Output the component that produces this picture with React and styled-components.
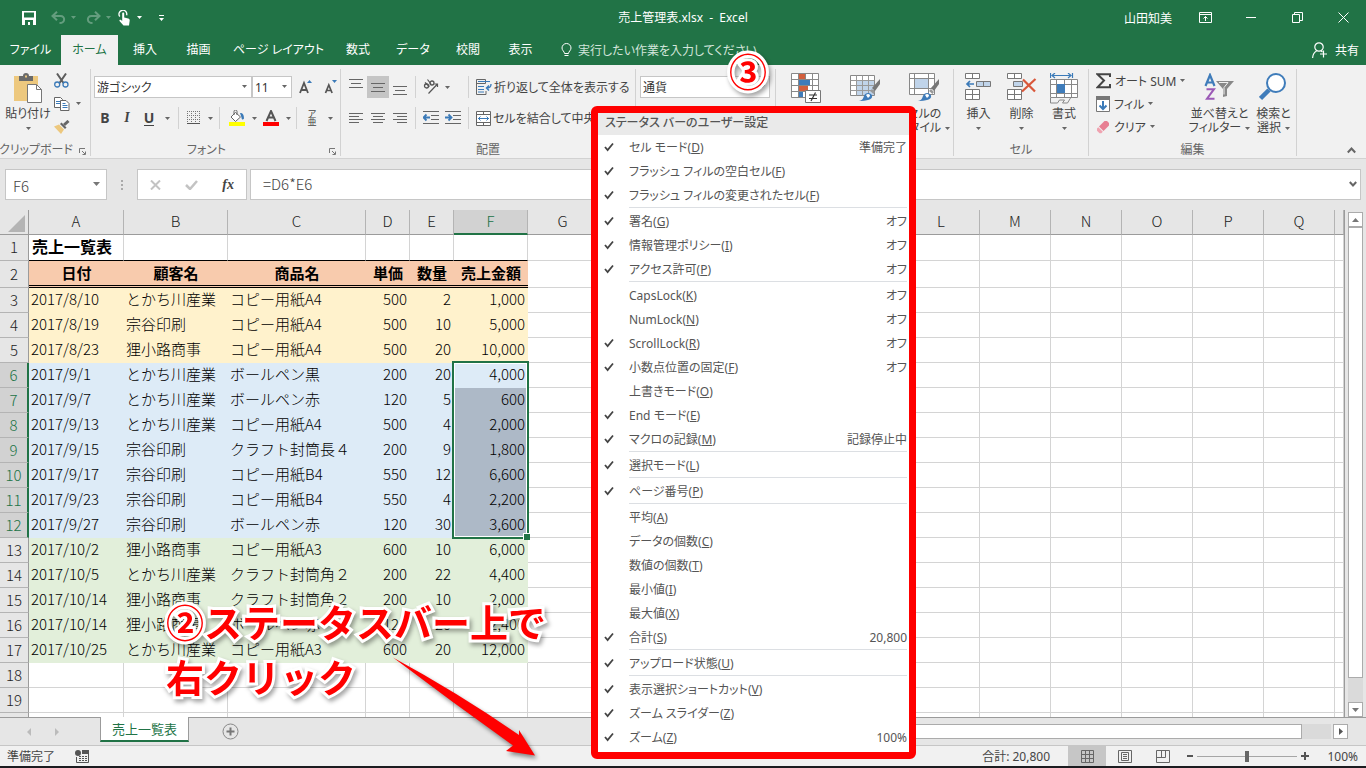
import React from 'react';
import styled, { createGlobalStyle, css } from 'styled-components';

const GREEN = '#217346';

const GlobalStyle = createGlobalStyle`
  * { box-sizing: border-box; }
  body {
    margin: 0;
    overflow: hidden;
    background: #e6e6e6;
    font-family: "Noto Sans", "Noto Sans CJK JP", sans-serif;
    font-size: 12px;
    font-feature-settings: "palt";
    color: #444;
  }
  button, input, select {
    font: inherit;
    font-feature-settings: inherit;
    color: inherit;
    border: 0;
    border-radius: 0;
    padding: 0;
    margin: 0;
    background: none;
    outline: none;
  }
  button { white-space: nowrap; }
`;

const Window = styled.div`
  position: relative;
  display: flex;
  flex-direction: column;
  height: 100vh;
  overflow: hidden;
`;

const Icon = styled.svg`
  display: block;
  flex: none;
  fill: none;
  stroke: none;
`;

/* ---------- title bar ---------- */

const TitleBar = styled.header`
  display: grid;
  grid-template-columns: 1fr auto 1fr;
  align-items: center;
  flex: none;
  height: 35px;
  background: ${GREEN};
  color: #fff;
`;

const QuickAccess = styled.div`
  display: flex;
  align-items: center;
  padding-left: 19px;
  height: 32px;
`;

const QuickButton = styled.button`
  display: flex;
  align-items: center;
  justify-content: center;
  width: ${(p) => (p.$narrow ? 11 : 20)}px;
  height: 22px;
  margin-right: ${(p) => p.$gap || 0}px;
  opacity: ${(p) => (p.disabled ? 0.3 : 1)};
`;

const WindowTitle = styled.h1`
  margin: 0;
  font-size: 12px;
  font-weight: 400;
  line-height: 32px;
  white-space: pre;
`;

const WindowButtons = styled.div`
  display: flex;
  align-items: center;
  justify-content: flex-end;
  height: 32px;
`;

const UserName = styled.span`
  margin-right: 10px;
`;

const WindowButton = styled.button`
  display: flex;
  align-items: center;
  justify-content: center;
  width: 46px;
  height: 32px;
`;

/* ---------- ribbon tabs ---------- */

const TabRow = styled.nav`
  display: flex;
  flex: none;
  height: 30px;
  background: ${GREEN};
  color: #fff;
`;

const RibbonTab = styled.button`
  width: ${(p) => p.$width}px;
  height: 30px;
  line-height: 28px;
  text-align: center;
  ${(p) => p.$active && css`
    background: #f1f1f1;
    color: ${GREEN};
  `}
`;

const TellMe = styled.button`
  display: flex;
  align-items: center;
  gap: 6px;
  margin-left: 14px;
  color: #d3e5db;
`;

const ShareButton = styled.button`
  display: flex;
  align-items: center;
  gap: 8px;
  margin-left: auto;
  padding-right: 7px;
`;

/* ---------- ribbon ---------- */

const RibbonBar = styled.section`
  display: flex;
  flex: none;
  height: 94px;
  padding: 4px 0 2px;
  background: #f1f1f1;
  border-bottom: 1px solid #d2d2d2;
`;

const RibbonGroup = styled.div`
  position: relative;
  display: flex;
  flex-direction: column;
  flex: none;
  width: ${(p) => p.$width}px;
  border-right: 1px solid #d2d2d2;
`;

const GroupBody = styled.div`
  display: flex;
  flex: 1;
  padding-left: ${(p) => p.$pad || 0}px;
`;

const GroupFooter = styled.div`
  display: flex;
  justify-content: center;
  align-items: center;
  height: 12px;
  line-height: 12px;
  padding-right: ${(p) => (p.$launcher ? 18 : 0)}px;
  white-space: nowrap;
  color: #666;
`;

const Launcher = styled.button`
  position: absolute;
  right: 4px;
  bottom: 1px;
`;

const Stack = styled.div`
  display: flex;
  flex-direction: column;
`;

const ToolStack = styled(Stack)`
  padding-top: 7px;
  gap: 9px;
`;

const ToolRow = styled.div`
  display: flex;
  align-items: center;
  height: 22px;
`;

const ToolButton = styled.button`
  display: flex;
  align-items: center;
  justify-content: center;
  width: ${(p) => p.$width || 22}px;
  height: 22px;
  background: ${(p) => (p.$active ? '#c5c5c5' : 'none')};
`;

const LabelButton = styled.button`
  display: flex;
  align-items: center;
  gap: ${(p) => p.$gap || 4}px;
  height: ${(p) => p.$height || 22}px;
  padding-left: ${(p) => p.$pad || 0}px;
`;

const Glyph = styled.span`
  font-size: 14px;
  font-weight: 700;
  font-style: ${(p) => (p.$italic ? 'italic' : 'normal')};
  font-family: ${(p) => (p.$italic ? '"Liberation Serif", serif' : '"Noto Sans", sans-serif')};
  border-bottom: ${(p) => (p.$underline ? '1px solid #444' : '0')};
  line-height: 14px;
`;

const Divider = styled.span`
  width: 1px;
  height: 22px;
  margin: 0 4px;
  background: #d2d2d2;
`;

const Combo = styled.span`
  position: relative;
  display: block;
  width: ${(p) => p.$width}px;
  height: 22px;

  select {
    appearance: none;
    width: 100%;
    height: 22px;
    padding: 0 16px 0 2px;
    border: 1px solid #c6c6c6;
    background: #fff;
    color: #333;
  }

  svg {
    position: absolute;
    right: 5px;
    top: 9px;
    pointer-events: none;
  }
`;

const BigButton = styled.button`
  display: flex;
  flex-direction: column;
  align-items: center;
  width: ${(p) => p.$width}px;
  padding-top: 4px;
`;

const BigIcon = styled.span`
  display: flex;
  align-items: flex-start;
  justify-content: center;
  height: 34px;
`;

const Caption = styled.span`
  display: flex;
  align-items: center;
  gap: 4px;
  height: 14px;
  line-height: 14px;
`;

const IconStack = styled.div`
  display: flex;
  flex-direction: column;
  padding-left: 1px;
`;

const IconStackButton = styled.button`
  display: flex;
  align-items: center;
  gap: 6px;
  height: 23px;
`;

const RibbonEnd = styled.div`
  display: flex;
  flex: 1;
  justify-content: flex-end;
  align-items: flex-end;
  padding: 0 10px 2px 0;
`;

/* ---------- formula bar ---------- */

const FormulaRow = styled.section`
  display: flex;
  flex: none;
  align-items: center;
  height: 51px;
  padding: 0 5px;
`;

const NameBox = styled.div`
  position: relative;
  width: 102px;
  height: 31px;

  input {
    width: 100%;
    height: 31px;
    padding: 2px 24px 0 7px;
    border: 1px solid #c6c6c6;
    background: #fff;
    font-family: "Noto Sans CJK JP", sans-serif;
    font-size: 15px;
    font-weight: 300;
  }

  svg {
    position: absolute;
    right: 7px;
    top: 13px;
  }
`;

const FormulaButtons = styled.div`
  display: flex;
  align-items: center;
  justify-content: space-around;
  width: 110px;
  height: 31px;
  border: 1px solid #c6c6c6;
  background: #fff;
`;

const FormulaField = styled.div`
  position: relative;
  flex: 1;
  margin-left: 3px;

  input {
    display: block;
    width: 100%;
    height: 31px;
    padding: 0 24px 2px 12px;
    border: 1px solid #c6c6c6;
    background: #fff;
    font-family: "Noto Sans CJK JP", sans-serif;
    font-size: 15px;
    font-weight: 300;
  }

  svg {
    position: absolute;
    right: 4px;
    top: 12px;
  }
`;

const Grip = styled.span`
  display: flex;
  justify-content: center;
  width: 30px;
`;

/* ---------- worksheet ---------- */

const SheetArea = styled.main`
  display: flex;
  flex: 1;
  min-height: 0;
`;

const SheetView = styled.div`
  position: relative;
  flex: 1;
  min-width: 0;
  overflow: hidden;
  background: #fff;
  border-right: 1px solid #9b9b9b;
`;

const Grid = styled.table`
  width: 100%;
  table-layout: fixed;
  border-collapse: separate;
  border-spacing: 0;
  font-family: "Noto Sans CJK JP", sans-serif;
  font-size: 15px;
  font-weight: 300;
  font-feature-settings: normal;
  color: #000;
`;

const ColumnHead = styled.th`
  height: 25px;
  padding: 0 0 2px;
  font-weight: 300;
  line-height: 20px;
  background: ${(p) => (p.$selected ? '#d2d2d2' : '#e6e6e6')};
  color: ${(p) => (p.$selected ? GREEN : '#222')};
  border-right: 1px solid #b4b4b4;
  border-bottom: ${(p) => (p.$selected ? `2px solid ${GREEN}` : '1px solid #9b9b9b')};
`;

const CornerHead = styled(ColumnHead)`
  border-right-color: #9b9b9b;
  svg { margin: 4px 0 0 8px; }
`;

const RowHead = styled.th`
  padding: 0 0 1px;
  font-weight: 300;
  line-height: 20px;
  text-align: center;
  background: ${(p) => (p.$selected ? '#d2d2d2' : '#e6e6e6')};
  color: ${(p) => (p.$selected ? GREEN : '#222')};
  border-bottom: 1px solid #b4b4b4;
  border-right: ${(p) => (p.$selected ? `2px solid ${GREEN}` : '1px solid #9b9b9b')};
`;

const Row = styled.tr`
  height: ${(p) => p.$height}px;
`;

const Cell = styled.td`
  padding: 0 2px 3px;
  line-height: 20px;
  white-space: nowrap;
  text-align: ${(p) => p.$align || 'left'};
  border-right: 1px solid ${(p) => p.$fill || '#d4d4d4'};
  border-bottom: 1px solid ${(p) => p.$fill || '#d4d4d4'};
  background: ${(p) => p.$fill || '#fff'};
  ${(p) => p.$title && css`
    padding-left: 3px;
    font-weight: 700;
    font-size: 16px;
  `}
  ${(p) => p.$ruled && css`border-bottom-color: #000;`}
  ${(p) => p.$heading && css`
    padding-bottom: 1px;
    font-weight: 700;
    border-right: 0;
    border-bottom: 3px double #000;
  `}
`;

const Selection = styled.div`
  position: absolute;
  left: 452px;
  top: 151px;
  width: 77px;
  height: 178px;
  border: 2px solid ${GREEN};
  box-shadow: inset 0 0 0 1px #fff;

  &::after {
    content: "";
    position: absolute;
    right: -3px;
    bottom: -3px;
    width: 6px;
    height: 6px;
    background: ${GREEN};
    border: 1px solid #fff;
    border-width: 1px 0 0 1px;
  }
`;

const VerticalScroll = styled.div`
  display: flex;
  flex-direction: column;
  align-items: center;
  flex: none;
  width: 21px;
  padding-top: 2px;
  background: #e6e6e6;
`;

const ScrollArrow = styled.button`
  display: flex;
  flex: none;
  align-items: center;
  justify-content: center;
  width: 15px;
  height: 15px;
  background: #fff;
  border: 1px solid #ababab;
`;

const VerticalTrack = styled.div`
  flex: 1;
  width: 15px;
  background: #dadada;
`;

const VerticalThumb = styled.div`
  height: 95%;
  background: #fff;
  border: 1px solid #ababab;
`;

/* ---------- sheet tabs ---------- */

const SheetTabs = styled.nav`
  display: flex;
  flex: none;
  height: 28px;
  border-top: 1px solid #9b9b9b;
`;

const SheetNav = styled.div`
  display: flex;
  align-items: center;
  gap: 24px;
  width: 100px;
  padding-left: 27px;
`;

const SheetTab = styled.button`
  width: 89px;
  height: 25px;
  margin-top: -1px;
  font-size: 13px;
  background: #fff;
  color: ${GREEN};
  border: solid #9b9b9b;
  border-width: 0 1px;
  border-bottom: 2px solid ${GREEN};
`;

const AddSheet = styled.button`
  display: flex;
  align-items: center;
  margin-left: 33px;
`;

const HorizontalScroll = styled.div`
  display: flex;
  align-items: center;
  flex: 1;
  gap: 2px;
  margin-left: 366px;
  padding-right: 18px;
`;

const HorizontalTrack = styled.div`
  flex: 1;
  height: 15px;
  background: #dadada;
`;

const HorizontalThumb = styled.div`
  width: 96%;
  height: 15px;
  background: #fff;
  border: 1px solid #ababab;
`;

/* ---------- status bar ---------- */

const StatusBar = styled.footer`
  display: flex;
  align-items: center;
  flex: none;
  height: 23px;
  padding: 0 8px 0 7px;
  background: #f1f1f1;
  border-top: 1px solid #c6c6c6;
  border-bottom: 2px solid #1c1c20;
`;

const StatusText = styled.span`
  margin-right: ${(p) => p.$gap || 0}px;
`;

const StatusRight = styled.div`
  display: flex;
  align-items: center;
  margin-left: auto;
`;

const ViewButton = styled.button`
  display: flex;
  align-items: center;
  justify-content: center;
  width: 38px;
  height: 20px;
  background: ${(p) => (p.$active ? '#c6c6c6' : 'none')};
`;

const ZoomSlider = styled.input`
  appearance: none;
  width: 100px;
  height: 14px;
  margin: 0 4px;
  background: linear-gradient(#a6a6a6, #a6a6a6) center / 100% 1px no-repeat;

  &::-webkit-slider-thumb {
    appearance: none;
    width: 4px;
    height: 11px;
    background: #666;
  }
`;

const ZoomLevel = styled.button`
  width: 49px;
  text-align: right;
`;

/* ---------- context menu and notes ---------- */

const MenuFrame = styled.div`
  position: absolute;
  left: 591px;
  top: 106px;
  width: 325px;
  padding-bottom: 3px;
  background: #fff;
  border: 7px solid #f00;
  border-radius: 6px;
  color: #555;
`;

const MenuTitle = styled.div`
  height: 22px;
  padding-left: 7px;
  line-height: 20px;
  font-weight: 500;
  color: #555;
  background: #eaeaea;
`;

const MenuItem = styled.button`
  display: grid;
  grid-template-columns: 31px 1fr auto;
  align-items: center;
  width: 100%;
  height: 24px;
  padding-right: 2px;
  text-align: left;

  svg { margin-left: 6px; }
`;

const MenuRule = styled.hr`
  height: 1px;
  margin: 0 2px 1px 31px;
  border: 0;
  background: #dcdfe3;
`;

const Note = styled.p`
  position: absolute;
  left: ${(p) => p.$left}px;
  top: ${(p) => p.$top}px;
  margin: 0;
  font-family: "Noto Sans CJK JP", sans-serif;
  font-feature-settings: normal;
  font-size: 38px;
  font-weight: 700;
  line-height: 55px;
  white-space: pre;
  color: #f00;
  -webkit-text-stroke: 6px #fff;
  paint-order: stroke fill;
  stroke-linejoin: round;
  filter: drop-shadow(2px 3px 2px rgba(0, 0, 0, 0.35));
  pointer-events: none;
`;

const Arrow = styled.svg`
  position: absolute;
  left: 390px;
  top: 652px;
  filter: drop-shadow(2px 3px 2px rgba(0, 0, 0, 0.45));
  pointer-events: none;
`;

/* ---------- small drawings ---------- */

const Caret = ({ color = '#666' }) => (
  <Icon width="5" height="3"><path d="M0 0h5L2.5 3z" fill={color} /></Icon>
);

const WideCaret = () => (
  <Icon width="7" height="4"><path d="M0 0h7L3.5 4z" fill="#777" /></Icon>
);

const Check = () => (
  <Icon width="10" height="10" viewBox="0 0 10 10">
    <path d="M1 5l2.6 3L9 1.5" stroke="#444" strokeWidth="1.8" />
  </Icon>
);

const LauncherIcon = () => (
  <Icon width="7" height="7" viewBox="0 0 7 7">
    <path d="M.5 5V.5H6M3 3l3 3M6.5 3.5v3h-3" stroke="#777" />
  </Icon>
);

const SaveIcon = () => (
  <Icon width="14" height="14" viewBox="0 0 14 14">
    <path d="M0 0h14v14H0z M2 1.5v5h10v-5z M3 9v5h8V9z" fill="#fff" fillRule="evenodd" />
    <path d="M6 11h2v3H6z" fill="#fff" />
  </Icon>
);

const UndoIcon = ({ flip }) => (
  <Icon width="15" height="13" viewBox="0 0 15 13">
    <g transform={flip ? 'translate(15 0) scale(-1 1)' : undefined} stroke="#fff" strokeWidth="2">
      <path d="M6 .8L1.5 5 6 9.2M2 5h7.5c5 0 5 7-1 7" />
    </g>
  </Icon>
);

const TouchIcon = () => (
  <Icon width="13" height="16" viewBox="0 0 13 16">
    <path d="M1.8 6.5a3.9 3.9 0 1 1 6.8-1.2" stroke="#fff" strokeWidth="1.3" />
    <path d="M4.2 3.5c0-1.4 2-1.4 2 0v4l4 1c1 .3 1.6 1 1.5 2L11 15.5H5.5L1.5 11c-.5-1 .7-1.8 1.5-1l1.2 1z" fill="#fff" />
  </Icon>
);

const PasteIcon = () => (
  <Icon width="29" height="31" viewBox="0 0 29 31">
    <path d="M0 3h24v25H0z" fill="#edc87e" />
    <path d="M5 3h4a3 3 0 0 1 6 0h4v5H5z" fill="#6a6a6a" />
    <path d="M11 2.5h2v2h-2z" fill="#edc87e" />
    <path d="M13.5 11.5h9l5 5v13h-14z" fill="#fff" stroke="#777" />
    <path d="M22.5 11.5v5h5" stroke="#777" />
  </Icon>
);

const CutIcon = () => (
  <Icon width="15" height="15" viewBox="0 0 15 15">
    <path d="M3 .5l6.5 9.500M12 .5L5.5 10" stroke="#5d5d5d" strokeWidth="2" />
    <circle cx="3.2" cy="11.5" r="2.5" stroke="#3b7ab8" strokeWidth="1.3" />
    <circle cx="11.5" cy="11.5" r="2.5" stroke="#3b7ab8" strokeWidth="1.3" />
  </Icon>
);

const CopyIcon = () => (
  <Icon width="16" height="14" viewBox="0 0 16 14">
    <path d="M.5.5h6l2 2v8h-8z" fill="#fff" stroke="#666" />
    <path d="M2 4.5h4M2 6.5h4" stroke="#3b7ab8" />
    <path d="M6.5 3.5H12l3 3v7H6.500z" fill="#fff" stroke="#666" />
    <path d="M8.5 6.5h3M8.5 8.5h5M8.5 10.5h5" stroke="#3b7ab8" />
  </Icon>
);

const BrushIcon = () => (
  <Icon width="16" height="14" viewBox="0 0 16 14">
    <path d="M0 6.5l5-2 5 5L7 14z" fill="#edc87e" />
    <path d="M6 4l1.500-1.500 5 5L11 9z" fill="#666" />
    <path d="M10 5l4.500-4" stroke="#666" strokeWidth="3" />
  </Icon>
);

const SizeIcon = ({ small }) => (
  <Icon width="14" height="16" viewBox="0 0 14 16">
    {small
      ? <path d="M1.500 14L4.800 6l3.300 8M2.800 11.500h4" stroke="#555" strokeWidth="1.700" />
      : <path d="M1 14L5 4l4 10M2.500 11h5" stroke="#555" strokeWidth="1.800" />}
    <path d={small ? 'M8 1h5l-2.500 3z' : 'M8 4h5l-2.500-3z'} fill="#3b7ab8" />
  </Icon>
);

const BordersIcon = () => (
  <Icon width="14" height="14" viewBox="0 0 14 14">
    <path d="M.5 0v13M4.500 0v13M8.500 0v13M12.500 0v13M0 .5h14M0 4.500h14M0 8.500h14" stroke="#777" strokeDasharray="1 1" />
    <path d="M0 12.500h13" stroke="#555" />
  </Icon>
);

const FillIcon = () => (
  <Icon width="16" height="16" viewBox="0 0 16 16">
    <path d="M6.500 2.500l5 4.500-5 4.500L2 7z" fill="#fff" stroke="#666" />
    <path d="M5 5V1.500a1.500 1.500 0 0 1 3 0V5" stroke="#666" />
    <path d="M11 3c3 0 4 2 4 5.500-1 2-2.500 1-2.500-1z" fill="#3b7ab8" />
    <path d="M0 12h16v4H0z" fill="#ff0" />
  </Icon>
);

const FontColorIcon = () => (
  <Icon width="16" height="16" viewBox="0 0 16 16">
    <path d="M3.500 11L8 1l4.500 10M5 7.500h6" stroke="#555" strokeWidth="2" />
    <path d="M0 12h16v4H0z" fill="#f00" />
  </Icon>
);

const RubyGlyph = styled.span`
  display: flex;
  flex-direction: column;
  align-items: center;
  font-size: 9px;
  line-height: 8px;
`;

const LinesIcon = ({ lines, width = 14 }) => (
  <Icon width={width} height="16" viewBox={`0 0 ${width} 16`}>
    {lines.map(([x, y, w]) => <path key={y} d={`M${x} ${y}.5h${w}`} stroke="#666" />)}
  </Icon>
);

const OrientIcon = () => (
  <Icon width="16" height="16" viewBox="0 0 16 16">
    <circle cx="3.500" cy="7" r="2" stroke="#555" strokeWidth="1.300" />
    <path d="M2 3.500l4.500 4" stroke="#555" strokeWidth="1.300" />
    <circle cx="9" cy="4" r="2" stroke="#555" strokeWidth="1.300" />
    <path d="M4.500.5L8 5M5.500 14.500L14.500 5M11.500 5h3v3" stroke="#555" strokeWidth="1.200" />
  </Icon>
);

const IndentIcon = ({ right }) => (
  <Icon width="16" height="14" viewBox="0 0 16 14">
    <path d="M0 .5h16M8 4.500h8M8 8.500h8M0 12.500h16" stroke="#666" />
    <path d={right ? 'M0 6.500h6M3.500 3.500l3 3-3 3' : 'M1 6.500h6M3.500 3.500l-3 3 3 3'} stroke="#3b7ab8" strokeWidth="1.800" />
  </Icon>
);

const WrapIcon = () => (
  <Icon width="16" height="16" viewBox="0 0 16 16">
    <path d="M.5.5h9v4h-9zM.5 4v11.500H10V12" stroke="#666" />
    <path d="M2 2.500h12M2 7.500h6M2 10.500h6M2 13h6" stroke="#3b7ab8" />
    <path d="M15 5c0 3-1 4-4.500 4M13 6.500L10.500 9l2.500 2.500" stroke="#3b7ab8" strokeWidth="1.400" />
  </Icon>
);

const MergeIcon = () => (
  <Icon width="15" height="15" viewBox="0 0 15 15">
    <path d="M.5.5h14v14H.5zM.5 3.500h14M.5 11.500h14M7.500.5v3M7.500 11.500v3" fill="#fff" stroke="#666" />
    <path d="M2 7.500h11M4.500 5.500l-2 2 2 2M10.500 5.500l2 2-2 2" stroke="#3b7ab8" />
  </Icon>
);

const ConditionalIcon = () => (
  <Icon width="30" height="31" viewBox="0 0 30 31">
    <path d="M.5.5h27v24H.5zM.5 6.500h27M.5 12.500h27M.5 18.500h27M7.500.5v24M14.500.5v24M21.500.5v24" fill="#fff" stroke="#888" />
    <path d="M8 1h6v5H8zM8 13h9v5H8z" fill="#d35f3d" />
    <path d="M8 7h11v5H8zM8 19h4v5H8z" fill="#3f7cba" />
    <path d="M14.500 17.500h15v12h-15z" fill="#fff" stroke="#777" />
    <path d="M18 22h8M18 25.500h8M24.500 19.500l-4.500 8.500" stroke="#333" strokeWidth="1.200" />
  </Icon>
);

const Brush = () => (
  <g>
    <path d="M30 6l-8 9 3 3 5-7z" fill="#777" />
    <path d="M22 16l3 3-1.500 2-3.500-3z" fill="#999" />
    <path d="M7 28c5 0 6-2 7-5 1-4 7-4 8-.5 1 4-4 5.500-15 5.500z" fill="#3f7cba" />
    <path d="M16 22c2-2 4-1 4 1l-2 2z" fill="#fff" />
  </g>
);

const TableStyleIcon = () => (
  <Icon width="30" height="31" viewBox="0 0 30 31">
    <path d="M.5 2.500h24v20H.5z" fill="#fff" stroke="#888" />
    <path d="M7 8h17v14H7z" fill="#c0d4ea" />
    <path d="M.5 7.500h24M.5 12.500h24M.5 17.500h24M6.500 2.500v20M12.500 2.500v20M18.500 2.500v20" stroke="#999" />
    <Brush />
  </Icon>
);

const CellStyleIcon = () => (
  <Icon width="30" height="31" viewBox="0 0 30 31">
    <path d="M.5.5h25v21H.5zM.5 5.500h25M.5 15.500h25M5.500.5v21M19.500.5v21" fill="#fff" stroke="#888" />
    <path d="M6 6h13v9H6z" fill="#c0d4ea" />
    <Brush />
  </Icon>
);

const CellsBase = () => (
  <path d="M.5.5h14v5H.5zM7.500.5v5M.5 16.500h14v10H.5zM.5 21.500h14M7.500 16.500v10" fill="#fff" stroke="#777" />
);

const InsertIcon = () => (
  <Icon width="27" height="28" viewBox="0 0 27 28">
    <CellsBase />
    <path d="M11.500 8.500h14v5h-14zM18.500 8.500v5" fill="#c0d4ea" stroke="#777" />
    <path d="M2 11h7M5 8l-3 3 3 3" stroke="#3b7ab8" strokeWidth="1.700" />
  </Icon>
);

const DeleteIcon = () => (
  <Icon width="30" height="28" viewBox="0 0 30 28">
    <CellsBase />
    <path d="M6.500 8.500h9v5h-9z" fill="#c0d4ea" stroke="#777" />
    <path d="M16 6.500l12 12M28.500 6L15 18.500" stroke="#d9573a" strokeWidth="2.200" />
  </Icon>
);

const FormatIcon = () => (
  <Icon width="28" height="31" viewBox="0 0 28 31">
    <path d="M.5 0v5M22.500 0v5M2 2.500h19M5 0L2 2.500 5 5M18 0l3 2.500L18 5" stroke="#3b7ab8" strokeWidth="1.200" />
    <path d="M.5 6.500h27v18H.5zM.5 11.500h27M.5 20.500h27M6.500 6.500v18M14.500 6.500v18M21.500 6.500v18" fill="#fff" stroke="#888" />
    <path d="M7 11h8v9H7z" fill="#3f7cba" />
    <path d="M.5 25v5h7l2-3h5l-2 3h5l3-5" stroke="#888" />
  </Icon>
);

const SigmaIcon = () => (
  <Icon width="15" height="16" viewBox="0 0 15 16">
    <path d="M14 4V1.200H1.500L8 7.500l-6.500 6.800H14V11" stroke="#444" strokeWidth="2" />
  </Icon>
);

const FillDownIcon = () => (
  <Icon width="14" height="16" viewBox="0 0 14 16">
    <path d="M.5.5h13v15H.5z" fill="#fff" stroke="#777" />
    <path d="M0 0h14v4H0z" fill="#777" />
    <path d="M7 5v8M3.500 9.500L7 13l3.500-3.500" stroke="#3b7ab8" strokeWidth="2" />
  </Icon>
);

const EraserIcon = () => (
  <Icon width="14" height="14" viewBox="0 0 14 14">
    <path d="M8.500 1h2.500l2 2v2.500L7.500 11 3 6.500z" fill="#e77f92" />
    <path d="M2.300 7.200l4.500 4.500-1.500 1.500H3.500L1 10.700V8.500z" fill="#f0a3b0" />
  </Icon>
);

const SortIcon = () => (
  <Icon width="30" height="28" viewBox="0 0 30 28">
    <path d="M1.500 13L6 2l4.500 11M3 9.500h6" stroke="#3f7cba" strokeWidth="2.200" />
    <path d="M2.500 16.200H10l-7 9.500h7.500" stroke="#9b59b6" strokeWidth="2" />
    <path d="M12 8h18l-7 8v7l-4 1v-8z" fill="#888" />
    <path d="M15 9.500h9l-4 5v7" stroke="#f1f1f1" />
  </Icon>
);

const FindIcon = () => (
  <Icon width="28" height="28" viewBox="0 0 28 28">
    <path d="M10 17L1.500 25.500" stroke="#3f7cba" strokeWidth="4.500" />
    <circle cx="17" cy="10" r="9" fill="#fff" stroke="#3f7cba" strokeWidth="2" />
  </Icon>
);

const BulbIcon = () => (
  <Icon width="11" height="14" viewBox="0 0 11 14">
    <path d="M3.500 10.500c0-2-2.500-3-2.500-5.500a4.500 4.500 0 0 1 9 0c0 2.500-2.500 3.500-2.500 5.500zM3.500 12.500h4" stroke="#fff" />
  </Icon>
);

const PersonIcon = () => (
  <Icon width="15" height="16" viewBox="0 0 15 16">
    <circle cx="7" cy="5" r="4.200" stroke="#fff" strokeWidth="1.200" />
    <path d="M.6 16c.2-4 2-6 4-7M9 9l1.500 1M11.500 8.500v7M8 12h7" stroke="#fff" strokeWidth="1.200" />
  </Icon>
);

/* ---------- data ---------- */

const TABS = [
  ['ファイル', 61], ['ホーム', 57], ['挿入', 54], ['描画', 53], ['ページ レイアウト', 107],
  ['数式', 52], ['データ', 58], ['校閲', 52], ['表示', 53],
];

const COLUMNS = [
  ['A', 95], ['B', 104], ['C', 138], ['D', 44], ['E', 44], ['F', 74], ['G', 70], ['H', 76],
  ['I', 76], ['J', 76], ['K', 77], ['L', 77], ['M', 71], ['N', 71], ['O', 71], ['P', 71], ['Q', 71],
];

const HEADINGS = ['日付', '顧客名', '商品名', '単価', '数量', '売上金額'];

const SALES = [
  ['2017/8/10', 'とかち川産業', 'コピー用紙A4', '500', '2', '1,000'],
  ['2017/8/19', '宗谷印刷', 'コピー用紙A4', '500', '10', '5,000'],
  ['2017/8/23', '狸小路商事', 'コピー用紙A4', '500', '20', '10,000'],
  ['2017/9/1', 'とかち川産業', 'ボールペン黒', '200', '20', '4,000'],
  ['2017/9/7', 'とかち川産業', 'ボールペン赤', '120', '5', '600'],
  ['2017/9/13', 'とかち川産業', 'コピー用紙A4', '500', '4', '2,000'],
  ['2017/9/15', '宗谷印刷', 'クラフト封筒長４', '200', '9', '1,800'],
  ['2017/9/17', '宗谷印刷', 'コピー用紙B4', '550', '12', '6,600'],
  ['2017/9/23', '宗谷印刷', 'コピー用紙B4', '550', '4', '2,200'],
  ['2017/9/27', '宗谷印刷', 'ボールペン赤', '120', '30', '3,600'],
  ['2017/10/2', '狸小路商事', 'コピー用紙A3', '600', '10', '6,000'],
  ['2017/10/5', 'とかち川産業', 'クラフト封筒角２', '200', '22', '4,400'],
  ['2017/10/14', '狸小路商事', 'クラフト封筒角２', '200', '10', '2,000'],
  ['2017/10/14', '狸小路商事', 'ボールペン赤', '120', '20', '2,400'],
  ['2017/10/25', 'とかち川産業', 'コピー用紙A3', '600', '20', '12,000'],
];

const MONTH_FILL = { 8: '#fff2cc', 9: '#ddebf7', 10: '#e2efda' };

// label, access key, checked, value
const MENU = [
  ['セル モード', 'D', true, '準備完了'],
  ['フラッシュ フィルの空白セル', 'F', true],
  ['フラッシュ フィルの変更されたセル', 'F', true],
  null,
  ['署名', 'G', true, 'オフ'],
  ['情報管理ポリシー', 'I', true, 'オフ'],
  ['アクセス許可', 'P', true, 'オフ'],
  null,
  ['CapsLock', 'K', false, 'オフ'],
  ['NumLock', 'N', false, 'オフ'],
  ['ScrollLock', 'R', true, 'オフ'],
  ['小数点位置の固定', 'F', true, 'オフ'],
  ['上書きモード', 'O', false],
  ['End モード', 'E', true],
  ['マクロの記録', 'M', true, '記録停止中'],
  null,
  ['選択モード', 'L', true],
  null,
  ['ページ番号', 'P', true],
  null,
  ['平均', 'A', false],
  ['データの個数', 'C', false],
  ['数値の個数', 'T', false],
  ['最小値', 'I', false],
  ['最大値', 'X', false],
  ['合計', 'S', true, '20,800'],
  null,
  ['アップロード状態', 'U', true],
  null,
  ['表示選択ショートカット', 'V', true],
  ['ズーム スライダー', 'Z', true],
  ['ズーム', 'Z', true, '100%'],
];

/* ---------- sections ---------- */

function Header() {
  return (
    <TitleBar>
      <QuickAccess>
        <QuickButton $gap={9} aria-label="上書き保存"><SaveIcon /></QuickButton>
        <QuickButton disabled aria-label="元に戻す"><UndoIcon /></QuickButton>
        <QuickButton disabled $narrow $gap={4} aria-label="元に戻す一覧"><Caret color="#fff" /></QuickButton>
        <QuickButton disabled aria-label="やり直し"><UndoIcon flip /></QuickButton>
        <QuickButton disabled $narrow aria-label="やり直し一覧"><Caret color="#fff" /></QuickButton>
        <QuickButton aria-label="タッチ/マウス モード"><TouchIcon /></QuickButton>
        <QuickButton $narrow $gap={11} aria-label="モード一覧"><Caret color="#fff" /></QuickButton>
        <QuickButton $narrow aria-label="クイック アクセスのカスタマイズ">
          <Icon width="5" height="6"><path d="M0 0h5v1H0zM0 3h5L2.500 6z" fill="#fff" /></Icon>
        </QuickButton>
      </QuickAccess>
      <WindowTitle>売上管理表.xlsx  -  Excel</WindowTitle>
      <WindowButtons>
        <UserName>山田知美</UserName>
        <WindowButton aria-label="リボンの表示オプション">
          <Icon width="13" height="11" viewBox="0 0 13 11">
            <path d="M.5.5h12v10H.5zM.5 2.500h12M6.500 9V4.500M4.500 6.500l2-2 2 2" stroke="#fff" />
          </Icon>
        </WindowButton>
        <WindowButton aria-label="最小化">
          <Icon width="10" height="1"><path d="M0 0h10v1H0z" fill="#fff" /></Icon>
        </WindowButton>
        <WindowButton aria-label="元に戻す (縮小)">
          <Icon width="11" height="11" viewBox="0 0 11 11">
            <path d="M.5 2.500h7v8h-7zM2.500 2.500v-2h8v8h-3" stroke="#fff" />
          </Icon>
        </WindowButton>
        <WindowButton aria-label="閉じる">
          <Icon width="11" height="11" viewBox="0 0 11 11">
            <path d="M.5.5l10 10M10.500.5l-10 10" stroke="#fff" />
          </Icon>
        </WindowButton>
      </WindowButtons>
    </TitleBar>
  );
}

function Tabs() {
  return (
    <TabRow>
      {TABS.map(([name, width]) => (
        <RibbonTab key={name} $width={width} $active={name === 'ホーム'}>{name}</RibbonTab>
      ))}
      <TellMe><BulbIcon />実行したい作業を入力してください</TellMe>
      <ShareButton><PersonIcon />共有</ShareButton>
    </TabRow>
  );
}

function Group({ title, width, pad, launcher, children }) {
  return (
    <RibbonGroup $width={width}>
      <GroupBody $pad={pad}>{children}</GroupBody>
      <GroupFooter $launcher={launcher}>{title}</GroupFooter>
      {launcher && <Launcher aria-label={`${title}の設定`}><LauncherIcon /></Launcher>}
    </RibbonGroup>
  );
}

function Big({ icon, width, top, bottom }) {
  return (
    <BigButton $width={width}>
      <BigIcon>{icon}</BigIcon>
      <Caption>{top}</Caption>
      <Caption>{bottom}<Caret /></Caption>
    </BigButton>
  );
}

function DropDown({ label, width, value }) {
  return (
    <Combo $width={width}>
      <select aria-label={label} defaultValue={value}><option>{value}</option></select>
      <Caret />
    </Combo>
  );
}

const ArrowButton = ({ label, width = 14 }) => (
  <ToolButton $width={width} aria-label={label}><Caret /></ToolButton>
);

function Ribbon() {
  return (
    <RibbonBar>
      <Group title="クリップボード" width={91} pad={3} launcher>
        <Big width={50} icon={<PasteIcon />} top="貼り付け" />
        <IconStack>
          <IconStackButton aria-label="切り取り"><CutIcon /></IconStackButton>
          <IconStackButton aria-label="コピー"><CopyIcon /><Caret /></IconStackButton>
          <IconStackButton aria-label="書式のコピー"><BrushIcon /></IconStackButton>
        </IconStack>
      </Group>

      <Group title="フォント" width={250} pad={3} launcher>
        <ToolStack>
          <ToolRow>
            <DropDown label="フォント" width={158} value="游ゴシック" />
            <DropDown label="フォント サイズ" width={40} value="11" />
            <ToolButton $width={28} aria-label="フォント サイズの拡大"><SizeIcon /></ToolButton>
            <ToolButton aria-label="フォント サイズの縮小"><SizeIcon small /></ToolButton>
          </ToolRow>
          <ToolRow>
            <ToolButton aria-label="太字"><Glyph>B</Glyph></ToolButton>
            <ToolButton aria-label="斜体"><Glyph $italic>I</Glyph></ToolButton>
            <ToolButton aria-label="下線"><Glyph $underline>U</Glyph></ToolButton>
            <ArrowButton label="下線の種類" />
            <Divider />
            <ToolButton aria-label="罫線"><BordersIcon /></ToolButton>
            <ArrowButton label="罫線の種類" width={10} />
            <Divider />
            <ToolButton $width={26} aria-label="塗りつぶしの色"><FillIcon /></ToolButton>
            <ArrowButton label="色の一覧" width={8} />
            <ToolButton $width={26} aria-label="フォントの色"><FontColorIcon /></ToolButton>
            <ArrowButton label="フォントの色の一覧" width={8} />
            <Divider />
            <ToolButton aria-label="ふりがな"><RubyGlyph><span>ア</span><span>亜</span></RubyGlyph></ToolButton>
            <ArrowButton label="ふりがなの設定" />
          </ToolRow>
        </ToolStack>
      </Group>

      <Group title="配置" width={295} pad={4}>
        <ToolStack>
          <ToolRow>
            <ToolButton aria-label="上揃え"><LinesIcon lines={[[0, 0, 14], [2, 4, 10], [0, 8, 14]]} /></ToolButton>
            <ToolButton $active aria-label="上下中央揃え"><LinesIcon lines={[[0, 4, 14], [2, 8, 10], [0, 12, 14]]} /></ToolButton>
            <ToolButton aria-label="下揃え"><LinesIcon lines={[[0, 7, 14], [2, 11, 10], [0, 15, 14]]} /></ToolButton>
            <Divider />
            <ToolButton aria-label="方向"><OrientIcon /></ToolButton>
            <ArrowButton label="方向の一覧" width={10} />
          </ToolRow>
          <ToolRow>
            <ToolButton aria-label="左揃え"><LinesIcon lines={[[0, 3, 14], [0, 6, 10], [0, 9, 14], [0, 12, 10]]} /></ToolButton>
            <ToolButton aria-label="中央揃え"><LinesIcon lines={[[0, 3, 14], [2, 6, 10], [0, 9, 14], [2, 12, 10]]} /></ToolButton>
            <ToolButton aria-label="右揃え"><LinesIcon lines={[[0, 3, 14], [4, 6, 10], [0, 9, 14], [4, 12, 10]]} /></ToolButton>
            <Divider />
            <ToolButton aria-label="インデントを減らす"><IndentIcon /></ToolButton>
            <ToolButton aria-label="インデントを増やす"><IndentIcon right /></ToolButton>
          </ToolRow>
        </ToolStack>
        <ToolStack>
          <ToolRow><Divider /><LabelButton $pad={3} $gap={2}><WrapIcon />折り返して全体を表示する</LabelButton></ToolRow>
          <ToolRow><Divider /><LabelButton $pad={3} $gap={2}><MergeIcon />セルを結合して中央揃え</LabelButton></ToolRow>
        </ToolStack>
      </Group>

      <Group title="数値" width={140} pad={4}>
        <ToolStack><ToolRow><DropDown label="表示形式" width={130} value="通貨" /></ToolRow></ToolStack>
      </Group>

      <Group title="スタイル" width={178}>
        <Big width={60} icon={<ConditionalIcon />} top="条件付き" bottom="書式" />
        <Big width={60} icon={<TableStyleIcon />} top="テーブル" bottom="書式設定" />
        <Big width={58} icon={<CellStyleIcon />} top="セルの" bottom="スタイル" />
      </Group>

      <Group title="セル" width={135} pad={3}>
        <Big width={43} icon={<InsertIcon />} top="挿入" />
        <Big width={43} icon={<DeleteIcon />} top="削除" />
        <Big width={42} icon={<FormatIcon />} top="書式" />
      </Group>

      <Group title="編集" width={208} pad={7}>
        <Stack>
          <LabelButton $height={23}><SigmaIcon />オート SUM<Caret /></LabelButton>
          <LabelButton $height={23}><FillDownIcon />フィル<Caret /></LabelButton>
          <LabelButton $height={23}><EraserIcon />クリア<Caret /></LabelButton>
        </Stack>
        <Big width={68} icon={<SortIcon />} top="並べ替えと" bottom="フィルター" />
        <Big width={40} icon={<FindIcon />} top="検索と" bottom="選択" />
      </Group>

      <RibbonEnd>
        <button aria-label="リボンを折りたたむ">
          <Icon width="9" height="7" viewBox="0 0 9 7"><path d="M.8 5.500l3.700-4 3.700 4" stroke="#666" strokeWidth="2" /></Icon>
        </button>
      </RibbonEnd>
    </RibbonBar>
  );
}

function FormulaBar() {
  return (
    <FormulaRow>
      <NameBox><input aria-label="名前ボックス" defaultValue="F6" /><WideCaret /></NameBox>
      <Grip>
        <Icon width="2" height="10"><path d="M0 0h2v2H0zM0 4h2v2H0zM0 8h2v2H0z" fill="#aaa" /></Icon>
      </Grip>
      <FormulaButtons>
        <button aria-label="キャンセル">
          <Icon width="11" height="10" viewBox="0 0 11 10"><path d="M1 .5l9 9M10 .5l-9 9" stroke="#c3c3c3" strokeWidth="2" /></Icon>
        </button>
        <button aria-label="入力">
          <Icon width="13" height="10" viewBox="0 0 13 10"><path d="M1 5l4 4 7-8" stroke="#c3c3c3" strokeWidth="2.500" /></Icon>
        </button>
        <button aria-label="関数の挿入"><Glyph $italic>fx</Glyph></button>
      </FormulaButtons>
      <FormulaField>
        <input aria-label="数式バー" defaultValue="=D6*E6" />
        <Icon width="8" height="6" viewBox="0 0 8 6"><path d="M.8 1L4 4.500 7.200 1" stroke="#666" strokeWidth="2" /></Icon>
      </FormulaField>
    </FormulaRow>
  );
}

function BlankCells({ count }) {
  return Array.from({ length: count }, (_, i) => <Cell key={i} />);
}

function Worksheet() {
  return (
    <SheetArea>
      <SheetView>
        <Grid>
          <colgroup>
            <col width="29" />
            {COLUMNS.map(([name, width]) => <col key={name} width={width} />)}
            <col />
          </colgroup>
          <thead>
            <tr>
              <CornerHead>
                <Icon width="17" height="17"><path d="M17 0v17H0z" fill="#b4b4b4" /></Icon>
              </CornerHead>
              {COLUMNS.map(([name]) => <ColumnHead key={name} $selected={name === 'F'}>{name}</ColumnHead>)}
              <ColumnHead />
            </tr>
          </thead>
          <tbody>
            <Row $height={26}>
              <RowHead>1</RowHead>
              <Cell $title $ruled>売上一覧表</Cell>
              {HEADINGS.slice(1).map((name) => <Cell key={name} $ruled />)}
              <BlankCells count={12} />
            </Row>
            <Row $height={27}>
              <RowHead>2</RowHead>
              {HEADINGS.map((name) => (
                <Cell key={name} $heading $align="center" $fill="#f8cbad">{name}</Cell>
              ))}
              <BlankCells count={12} />
            </Row>
            {SALES.map((sale, i) => {
              const month = sale[0].split('/')[1];
              const selected = i >= 3 && i <= 9;
              return (
                <Row key={i} $height={25}>
                  <RowHead $selected={selected}>{i + 3}</RowHead>
                  {sale.map((value, c) => (
                    <Cell
                      key={c}
                      $align={c > 2 ? 'right' : 'left'}
                      $fill={c === 5 && selected && i > 3 ? '#adb9c7' : MONTH_FILL[month]}
                    >
                      {value}
                    </Cell>
                  ))}
                  <BlankCells count={12} />
                </Row>
              );
            })}
            {[18, 19, ''].map((n) => (
              <Row key={n} $height={25}>
                <RowHead>{n}</RowHead>
                <BlankCells count={18} />
              </Row>
            ))}
          </tbody>
        </Grid>
        <Selection />
      </SheetView>
      <VerticalScroll>
        <ScrollArrow aria-label="上へ"><Icon width="7" height="4"><path d="M0 4h7L3.500 0z" fill="#777" /></Icon></ScrollArrow>
        <VerticalTrack><VerticalThumb /></VerticalTrack>
        <ScrollArrow aria-label="下へ"><WideCaret /></ScrollArrow>
      </VerticalScroll>
    </SheetArea>
  );
}

function BottomTabs() {
  return (
    <SheetTabs>
      <SheetNav>
        <Icon width="4" height="8"><path d="M4 0v8L0 4z" fill="#bbb" /></Icon>
        <Icon width="4" height="8"><path d="M0 0v8l4-4z" fill="#bbb" /></Icon>
      </SheetNav>
      <SheetTab>売上一覧表</SheetTab>
      <AddSheet aria-label="新しいシート">
        <Icon width="17" height="17" viewBox="0 0 17 17">
          <circle cx="8.500" cy="8.500" r="7.500" stroke="#888" />
          <path d="M8.500 4.500v8M4.500 8.500h8" stroke="#777" strokeWidth="2" />
        </Icon>
      </AddSheet>
      <HorizontalScroll>
        <HorizontalTrack><HorizontalThumb /></HorizontalTrack>
        <ScrollArrow aria-label="右へ"><Icon width="4" height="7"><path d="M0 0v7l4-3.500z" fill="#555" /></Icon></ScrollArrow>
      </HorizontalScroll>
    </SheetTabs>
  );
}

function Status() {
  return (
    <StatusBar>
      <StatusText $gap={20}>準備完了</StatusText>
      <Icon width="14" height="13" viewBox="0 0 14 13">
        <circle cx="3" cy="3" r="3" fill="#555" />
        <path d="M7 0h7v4H7z" fill="#555" />
        <path d="M1.500 7v5.500h12V4M4 6.500h2M7 6.500h2M10 6.500h2M4 8.500h2M7 8.500h2M10 8.500h2M4 10.500h2M7 10.500h2M10 10.500h2" stroke="#555" />
      </Icon>
      <StatusRight>
        <StatusText $gap={18}>合計: 20,800</StatusText>
        <ViewButton $active aria-label="標準">
          <Icon width="13" height="13" viewBox="0 0 13 13">
            <path d="M.5.5h12v12H.5zM.5 4.500h12M.5 8.500h12M4.500.5v12M8.500.5v12" stroke="#666" />
          </Icon>
        </ViewButton>
        <ViewButton aria-label="ページ レイアウト">
          <Icon width="14" height="13" viewBox="0 0 14 13">
            <path d="M.5.5h13v12H.5zM3.500 2.500h7v8h-7zM5 4.500h4M5 6.500h4M5 8.500h4" stroke="#666" />
          </Icon>
        </ViewButton>
        <ViewButton aria-label="改ページ プレビュー">
          <Icon width="14" height="13" viewBox="0 0 14 13">
            <path d="M.5.5h13v12H.5zM5.500.5v7M.5 7.500h9M9.500.5v7" stroke="#666" />
          </Icon>
        </ViewButton>
        <button aria-label="縮小">
          <Icon width="11" height="10"><path d="M5 4h6v2H5z" fill="#555" /></Icon>
        </button>
        <ZoomSlider type="range" min="10" max="190" defaultValue="100" aria-label="ズーム" />
        <button aria-label="拡大">
          <Icon width="8" height="8"><path d="M3 0h2v3h3v2H5v3H3V5H0V3h3z" fill="#555" /></Icon>
        </button>
        <ZoomLevel>100%</ZoomLevel>
      </StatusRight>
    </StatusBar>
  );
}

function StatusMenu() {
  return (
    <MenuFrame role="menu">
      <MenuTitle>ステータス バーのユーザー設定</MenuTitle>
      {MENU.map((item, i) => {
        if (!item) return <MenuRule key={i} />;
        const [label, key, checked, value] = item;
        return (
          <MenuItem key={i} role="menuitemcheckbox" aria-checked={checked}>
            <span>{checked && <Check />}</span>
            <span>{label}(<u>{key}</u>)</span>
            <span>{value}</span>
          </MenuItem>
        );
      })}
    </MenuFrame>
  );
}

export default function App() {
  return (
    <Window>
      <GlobalStyle />
      <Header />
      <Tabs />
      <Ribbon />
      <FormulaBar />
      <Worksheet />
      <BottomTabs />
      <Status />
      <StatusMenu />
      <Note $left={729} $top={42}>③</Note>
      <Note $left={166} $top={593}>{'②ステータスバー上で\n右クリック'}</Note>
      <Arrow width="156" height="112">
        <path d="M3 5.500Q70 42 129 83V78L145 103.500 116 99l7-5.500Q62 50 3 5.500z" fill="#f00" />
      </Arrow>
    </Window>
  );
}
